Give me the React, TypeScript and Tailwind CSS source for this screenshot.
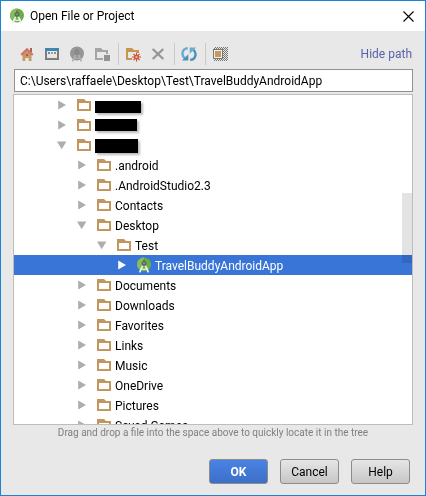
import { useState } from "react";
import type { ReactNode } from "react";

type Entry = {
  name: string;
  indent: string;
  open?: boolean;
  project?: boolean;
  mask?: string;
};

const L0 = "pl-[43px]";
const L1 = "pl-[63px]";
const L2 = "pl-[83px]";
const L3 = "pl-[103px]";

const entries: Entry[] = [
  { name: "", indent: L0, mask: "mt-1 h-3 w-[46px]" },
  { name: "", indent: L0, mask: "h-3 w-[42px]" },
  { name: "", indent: L0, mask: "mt-0.5 h-3.5 w-[43px]", open: true },
  { name: ".android", indent: L1 },
  { name: ".AndroidStudio2.3", indent: L1 },
  { name: "Contacts", indent: L1 },
  { name: "Desktop", indent: L1, open: true },
  { name: "Test", indent: L2, open: true },
  { name: "TravelBuddyAndroidApp", indent: L3, project: true },
  { name: "Documents", indent: L1 },
  { name: "Downloads", indent: L1 },
  { name: "Favorites", indent: L1 },
  { name: "Links", indent: L1 },
  { name: "Music", indent: L1 },
  { name: "OneDrive", indent: L1 },
  { name: "Pictures", indent: L1 },
  { name: "Saved Games", indent: L1 },
];

function StudioIcon({ gray = false }: { gray?: boolean }) {
  return (
    <svg width="14" height="16" viewBox="1 0 14 16" aria-hidden="true" className="shrink-0">
      <circle cx="8" cy="7.5" r="7" fill={gray ? "#969696" : "#6cae45"} />
      {!gray && <path d="M8 .5A7 7 0 0 0 2.5 11.8L8 7.5z" fill="#85bd5a" />}
      <path d="M7.2 7.5 3.6 15.4M8.8 7.5l3.6 7.9" stroke={gray ? "#b0b0b0" : "#eef2ec"} strokeWidth="1.7" fill="none" />
      <path d="M4.4 11.2c2 1.4 5.2 1.4 7.2 0" stroke={gray ? "#adadad" : "#eef2ec"} strokeWidth="1.2" fill="none" />
      <circle cx="8" cy="6.4" r="2.5" fill={gray ? "#858585" : "#5b6b5c"} />
      <circle cx="8" cy="6.4" r=".8" fill={gray ? "#9d9d9d" : "#9db297"} />
      <path d="M8 2.6v2" stroke={gray ? "#858585" : "#5b6b5c"} strokeWidth="1.6" />
    </svg>
  );
}

function FolderIcon() {
  return (
    <svg width="14" height="12" viewBox="0 0 14 12" aria-hidden="true" className="shrink-0">
      <path fillRule="evenodd" fill="#c1965f" d="M0 0h7l2 2h5v10H0zM2 4v6h10V4z" />
    </svg>
  );
}

function Arrow({ open, light }: { open?: boolean; light?: boolean }) {
  return (
    <svg width="10" height="10" viewBox="0 0 10 10" aria-hidden="true">
      <path d={open ? "M0 1.5h9.4L4.7 9.3z" : "M1.2.4 9 5 1.2 9.6z"} fill={light ? "#fff" : "#adadad"} />
    </svg>
  );
}

function ToolButton({ label, children }: { label: string; children: ReactNode }) {
  return (
    <button type="button" aria-label={label} title={label} className="flex h-[22px] w-[25px] items-center pl-1">
      <span className="flex w-4 justify-center">{children}</span>
    </button>
  );
}

function Divider() {
  return <span className="mr-0.5 ml-[3px] h-[22px] w-px bg-[#cacaca]" />;
}

function Toolbar() {
  return (
    <div className="flex items-center">
      <ToolButton label="Home">
        <svg width="16" height="16" viewBox="0 0 16 16">
          <path d="M11 2h2v4h-2z" fill="#a8645a" />
          <path d="M3.5 8 8 3.6 12.5 8v7H9.7v-3H6.3v3H3.5z" fill="#c69b62" />
          <path d="M7 8h2v2H7z" fill="#8a6f55" />
          <path d="M2.2 9 8 3.2 13.8 9" fill="none" stroke="#d4706c" strokeWidth="2.2" />
        </svg>
      </ToolButton>
      <ToolButton label="Desktop">
        <svg width="14" height="14" viewBox="0 0 14 14">
          <path d="M0 4h14v9H0zM2 4v7h10V4z" fill="#7d7d7d" fillRule="evenodd" />
          <path d="M0 1h14v3H0z" fill="#3d88b5" />
          <path d="M3 5h2v2H3z" fill="#4f93bd" />
          <path d="M6 5h2v2H6z" fill="#cf9d5e" />
          <path d="M9 5h2v2H9z" fill="#8d8d8d" />
        </svg>
      </ToolButton>
      <ToolButton label="Project directory">
        <StudioIcon gray />
      </ToolButton>
      <ToolButton label="Module directory">
        <svg width="16" height="16" viewBox="0 0 16 16">
          <path d="M1 2h6l2 2h5v4h-2V6H3v6h6v2H1z" fill="#a5a5a5" />
          <path d="M10 9h6v6h-6z" fill="#929292" />
        </svg>
      </ToolButton>
      <Divider />
      <ToolButton label="New folder">
        <svg width="16" height="16" viewBox="0 0 16 16">
          <path d="M1 2h6l2 2h5v3h-2V6H3v6h4v2H1z" fill="#c6954e" />
          <path d="M11.5 6.5v9M7 11h9M8.4 7.9l6.2 6.2M14.6 7.9l-6.2 6.2" stroke="#c84a35" strokeWidth="1.1" />
          <circle cx="11.5" cy="11" r="2.5" fill="#d64c37" />
          <circle cx="11.5" cy="11" r="1.2" fill="#efb08c" />
        </svg>
      </ToolButton>
      <ToolButton label="Delete">
        <svg width="14" height="14" viewBox="0 0 14 14">
          <path d="m1.7 2 10.6 10M12.3 2 1.7 12" stroke="#969696" strokeWidth="2.3" />
        </svg>
      </ToolButton>
      <Divider />
      <ToolButton label="Refresh">
        <svg width="16" height="16" viewBox="0 0 16 16">
          <path d="M6.8 2.2C.6 2.5.2 9.5 3.8 12.2" fill="none" stroke="#69abd0" strokeWidth="2.4" />
          <path d="M1 14.5h6.3V8.2z" fill="#4990bd" />
          <path d="M9.2 13.8c6.2-.3 6.6-7.3 3-10" fill="none" stroke="#4a91be" strokeWidth="2.4" />
          <path d="M15 1.5H8.7v6.3z" fill="#69abd0" />
        </svg>
      </ToolButton>
      <Divider />
      <ToolButton label="Show hidden files">
        <svg width="16" height="16" viewBox="0 0 16 16">
          <defs>
            <pattern id="checks" width="2" height="2" patternUnits="userSpaceOnUse">
              <path d="M0 0h1v1H0zM1 1h1v1H1z" fill="#777" />
            </pattern>
          </defs>
          <path d="M2 1h14v14H2z" fill="url(#checks)" shapeRendering="crispEdges" />
          <path d="M1 3h10v10H1z" fill="#777" />
          <path d="M2 4h8v8H2z" fill="#eee" />
          <path d="M3 5h6v6H3z" fill="#c99a55" />
        </svg>
      </ToolButton>
    </div>
  );
}

function Row({ entry, selected, onSelect }: { entry: Entry; selected: boolean; onSelect: () => void }) {
  return (
    <li
      role="treeitem"
      aria-selected={selected}
      aria-expanded={!!entry.open}
      onClick={onSelect}
      className={`flex h-5 items-center ${entry.indent} ${selected ? "bg-[#3875d7] text-white" : "text-black"}`}
    >
      <Arrow open={entry.open} light={selected} />
      <span className="ml-2.5 flex w-[18px] shrink-0 items-center">
        {entry.project ? <StudioIcon /> : <FolderIcon />}
      </span>
      {entry.mask ? (
        <span className={`bg-black shadow-[2px_2px_2px_#0004] ${entry.mask}`} />
      ) : (
        <span className="pt-0.5 whitespace-nowrap">{entry.name}</span>
      )}
    </li>
  );
}

const dialogButton = "h-[25px] w-[59px] rounded-[3px] border border-[#8c8c8c] bg-linear-to-b";

export default function App() {
  const [selected, setSelected] = useState(8);
  const [path, setPath] = useState("C:\\Users\\raffaele\\Desktop\\Test\\TravelBuddyAndroidApp");

  return (
    <main className="flex min-h-screen flex-col border border-[#1883d7] bg-[#e8e8e8] font-['Roboto','Noto_Sans',sans-serif] text-[12px] leading-4 text-black">
      <header className="flex h-[30px] items-center bg-white pr-2.5 pl-[9px]">
        <StudioIcon />
        <h1 className="ml-1.5 flex-1">Open File or Project</h1>
        <button type="button" aria-label="Close" className="p-px">
          <svg width="11" height="11" viewBox="0 0 11 11">
            <path d="m.5.5 10 10M10.5.5l-10 10" stroke="#000" strokeWidth="1.1" />
          </svg>
        </button>
      </header>

      <section className="flex flex-1 flex-col px-3">
        <div className="mt-3 flex items-center justify-between pr-px pl-0.5">
          <Toolbar />
          <a href="#path" className="text-[#5a62a8]">Hide path</a>
        </div>

        <input
          id="path"
          aria-label="Path"
          value={path}
          onChange={(e) => setPath(e.target.value)}
          className="mt-1 ml-px h-[23px] border border-[#919191] bg-white px-[5px] outline-none"
        />

        <div className="relative mt-0.5 h-[331px] overflow-hidden border border-[#bdbdbd] bg-white">
          <ul role="tree" aria-label="Folders">
            {entries.map((entry, i) => (
              <Row key={i} entry={entry} selected={i === selected} onSelect={() => setSelected(i)} />
            ))}
          </ul>
          <span className="absolute top-[98px] right-0 h-[70px] w-2.5 bg-[#e3e3e3] mix-blend-multiply" />
        </div>

        <p className="text-center text-[10px] leading-4 text-[#808080]">
          Drag and drop a file into the space above to quickly locate it in the tree
        </p>

        <footer className="mt-[18px] flex justify-end gap-3 pr-[3px] pb-2.5">
          <button type="button" className={`${dialogButton} from-[#4a83e3] to-[#3c6fc9] font-bold text-white`}>OK</button>
          <button type="button" className={`${dialogButton} from-[#e6e6e6] to-[#c6c6c6]`}>Cancel</button>
          <button type="button" className={`${dialogButton} from-[#e6e6e6] to-[#c6c6c6]`}>Help</button>
        </footer>
      </section>
    </main>
  );
}
